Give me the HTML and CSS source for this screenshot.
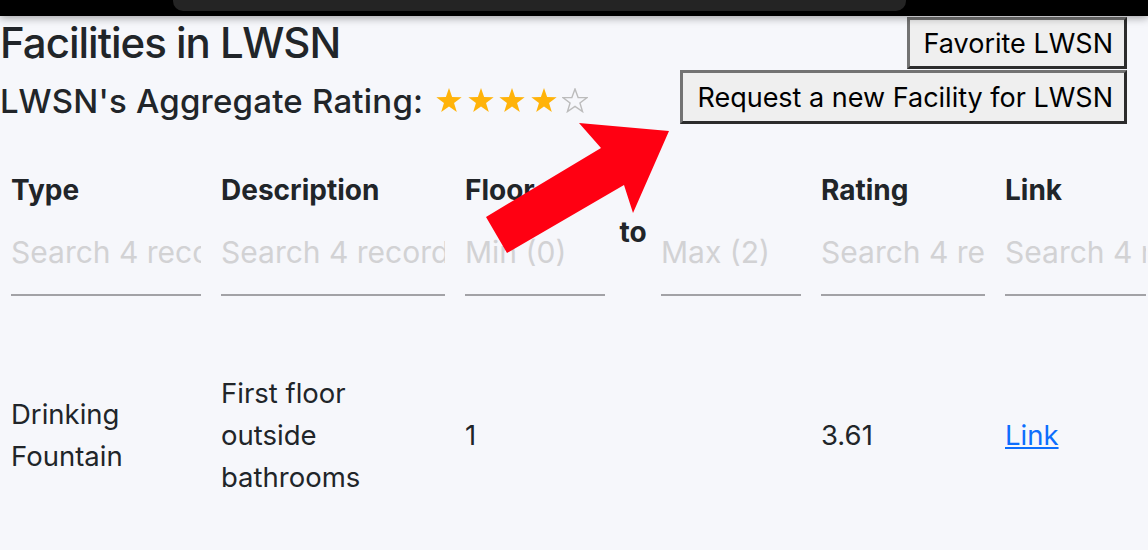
FILE: index.html
```html
<!DOCTYPE html>
<html lang="en">
<head>
<meta charset="utf-8">
<title>Facilities in LWSN</title>
<link rel="stylesheet" href="styles.css">
</head>
<body>
<div class="topbar"><div class="tab"></div></div>
<header class="head">
  <div class="titles">
    <h1 class="title">Facilities in LWSN</h1>
    <h2 class="subtitle">LWSN's Aggregate Rating:
      <span class="stars">
        <svg class="star" viewBox="0 0 26 25"><polygon class="full" points="13,0 16.12,9.01 25.65,9.19 18.04,14.94 20.82,24.06 13,18.6 5.18,24.06 7.96,14.94 0.35,9.19 9.88,9.01"/></svg>
        <svg class="star" viewBox="0 0 26 25"><polygon class="full" points="13,0 16.12,9.01 25.65,9.19 18.04,14.94 20.82,24.06 13,18.6 5.18,24.06 7.96,14.94 0.35,9.19 9.88,9.01"/></svg>
        <svg class="star" viewBox="0 0 26 25"><polygon class="full" points="13,0 16.12,9.01 25.65,9.19 18.04,14.94 20.82,24.06 13,18.6 5.18,24.06 7.96,14.94 0.35,9.19 9.88,9.01"/></svg>
        <svg class="star" viewBox="0 0 26 25"><polygon class="full" points="13,0 16.12,9.01 25.65,9.19 18.04,14.94 20.82,24.06 13,18.6 5.18,24.06 7.96,14.94 0.35,9.19 9.88,9.01"/></svg>
        <svg class="star" viewBox="0 0 26 25"><polygon class="empty" points="13,1 16.12,9.51 25.15,9.59 17.94,14.94 20.52,23.56 13,18.4 5.48,23.56 8.06,14.94 0.85,9.59 9.88,9.51"/></svg>
      </span>
    </h2>
  </div>
  <div class="actions">
    <button class="btn btn-fav">Favorite LWSN</button>
    <button class="btn btn-req">Request a new Facility for LWSN</button>
  </div>
</header>

<section class="grid">
  <div class="row row-head">
    <div class="th">Type</div>
    <div class="th">Description</div>
    <div class="th">Floor</div>
    <div class="th"></div>
    <div class="th"></div>
    <div class="th">Rating</div>
    <div class="th">Link</div>
  </div>
  <div class="row row-search">
    <input class="search" type="text" placeholder="Search 4 records...">
    <input class="search" type="text" placeholder="Search 4 records...">
    <input class="search" type="text" placeholder="Min (0)">
    <div class="to">to</div>
    <input class="search" type="text" placeholder="Max (2)">
    <input class="search" type="text" placeholder="Search 4 records...">
    <input class="search" type="text" placeholder="Search 4 records...">
  </div>
  <div class="row row-data">
    <div class="td">Drinking Fountain</div>
    <div class="td">First floor outside bathrooms</div>
    <div class="td">1</div>
    <div class="td"></div>
    <div class="td"></div>
    <div class="td">3.61</div>
    <div class="td"><a class="link" href="#">Link</a></div>
  </div>
</section>

<svg class="arrow" viewBox="0 0 1148 550" width="1148" height="550">
  <polygon points="486,217 601,148 579,123 669,131 633,213 624,185 507,253" fill="#ff0012"/>
</svg>
</body>
</html>
```

FILE: styles.css
```css
html, body {
  margin: 0;
  padding: 0;
}
body {
  background: #f6f7fb;
  color: #212529;
  font-family: Inter, "Noto Sans", sans-serif;
  width: 1148px;
  height: 550px;
  overflow: hidden;
  position: relative;
}
.topbar {
  height: 16px;
  background: #000;
  box-shadow: 0 2px 8px rgba(0, 0, 0, 0.35);
  position: relative;
  z-index: 2;
}
.tab {
  margin-left: 173px;
  width: 733px;
  height: 11px;
  background: #242424;
  border-radius: 0 0 10px 10px;
}
.head {
  display: flex;
  justify-content: space-between;
  align-items: flex-start;
  padding-right: 21px;
}
.title {
  margin: 2px 0 0;
  font-size: 42px;
  font-weight: 500;
  line-height: 50px;
  letter-spacing: -1px;
}
.subtitle {
  margin: 13px 0 0;
  font-size: 33px;
  font-weight: 500;
  line-height: 40px;
  letter-spacing: 0.22px;
  display: flex;
  align-items: center;
  gap: 13px;
}
.stars {
  display: flex;
  gap: 5.5px;
  margin-top: -1px;
}
.star {
  width: 26px;
  height: 25px;
  display: block;
}
.full { fill: #ffb30a; }
.empty { fill: none; stroke: #bcbcbc; stroke-width: 1.4; }
.actions {
  display: flex;
  flex-direction: column;
  align-items: flex-end;
  gap: 1px;
  margin-top: 1px;
}
.btn {
  font-family: Inter, "Noto Sans", sans-serif;
  font-size: 27px;
  color: #000;
  background: #efefef;
  border: 3px solid;
  border-color: #737373 #2c2c2c #2c2c2c #737373;
  padding: 0 11px 0 14px;
  height: 52px;
}
.btn-req { height: 54px; }
.grid {
  margin-top: 46px;
}
.row {
  display: grid;
  grid-template-columns: 190px 224px 140px 16px 140px 164px 141px;
  column-gap: 20px;
  padding-left: 11px;
}
.row-head {
  height: 40px;
  align-items: center;
}
.th {
  font-size: 28px;
  font-weight: 700;
  line-height: 40px;
  white-space: nowrap;
}
.row-search {
  height: 86px;
}
.search {
  margin-top: 20px;
  height: 66px;
  box-sizing: border-box;
  width: 100%;
  padding: 0 0 20px;
  border: 0;
  border-bottom: 2px solid #a2a2a6;
  background: transparent;
  font-family: Inter, "Noto Sans", sans-serif;
  font-size: 30px;
  color: #212529;
  outline: none;
}
.search::placeholder {
  color: #d2d2d4;
}
.to {
  font-size: 28px;
  font-weight: 700;
  line-height: 40px;
  margin-top: 2px;
  justify-self: center;
  white-space: nowrap;
}
.row-data {
  padding-top: 76px;
  align-items: center;
}
.td {
  font-size: 27.5px;
  line-height: 42px;
}
.link {
  color: #0d6efd;
}
.arrow {
  position: absolute;
  left: 0;
  top: 0;
  pointer-events: none;
  z-index: 3;
}
```
